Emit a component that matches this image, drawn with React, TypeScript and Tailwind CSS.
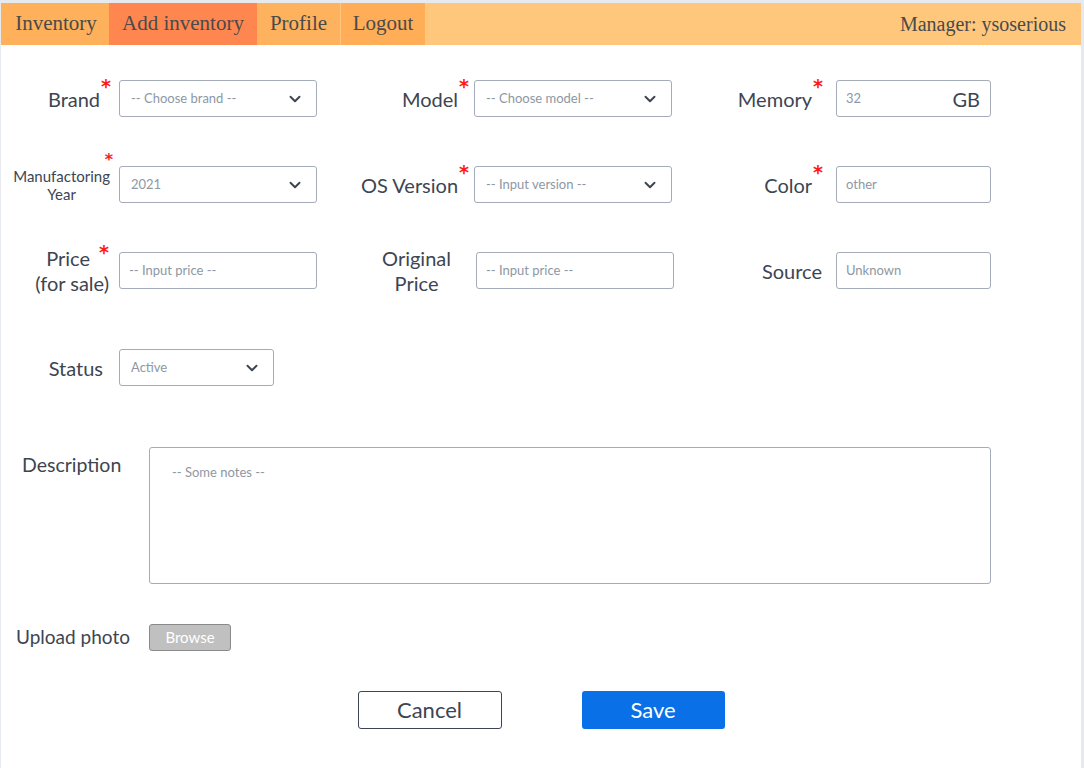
import { ChevronDown } from 'lucide-react'

const labelText = 'text-[20px] text-[#3d4552]'

function Star() {
  return (
    <span className="relative -top-[7px] ml-[1px] text-[19px] leading-none font-bold text-[#ff1a1a] [font-family:'DejaVu_Sans',sans-serif]">
      *
    </span>
  )
}

function Select({ value, width = 'w-[198px]' }: { value: string; width?: string }) {
  return (
    <div
      className={`${width} h-[37px] flex items-center justify-between pl-[11px] pr-[12px] border border-[#a3acb8] rounded-[3px] bg-white`}
    >
      <span className="text-[13px] text-[#8e97a3]">{value}</span>
      <ChevronDown size={18} strokeWidth={2.6} className="text-[#3d4552]" />
    </div>
  )
}

function Input({ value, width = 'w-[198px]' }: { value: string; width?: string }) {
  return (
    <div
      className={`${width} h-[37px] flex items-center pl-[9px] border border-[#a3acb8] rounded-[3px] bg-white`}
    >
      <span className="text-[13px] text-[#8e97a3]">{value}</span>
    </div>
  )
}

export default function App() {
  return (
    <div className="min-h-screen bg-white border-t-[3px] border-l border-r-[3px] border-[#e6e9ee] [font-family:Lato,'Open_Sans',sans-serif]">
      {/* Nav */}
      <nav className="h-[42px] flex items-stretch bg-[#ffc77c] text-[21px] text-[#4a4a4a] [font-family:'Liberation_Serif',serif]">
        <a className="w-[108px] flex items-center justify-center pl-[2px] bg-[#ffb05b]">Inventory</a>
        <a className="w-[148px] flex items-center justify-center bg-[#ff864f]">Add inventory</a>
        <a className="w-[84px] flex items-center justify-center bg-[#ffb25e] border-r border-[#ffc77c]">Profile</a>
        <a className="w-[84px] flex items-center justify-center bg-[#ffae57]">Logout</a>
        <div className="flex-1" />
        <div className="flex items-center pr-[15px] text-[20px]">Manager: ysoserious</div>
      </nav>

      {/* Form grid */}
      <div className="pt-[35px] grid grid-cols-[118px_198px_157px_198px_164px_154px] grid-rows-[37px_37px_37px] gap-y-[49px] items-center">
        <div className={`flex justify-end pr-[8px] ${labelText}`}>
          Brand<Star />
        </div>
        <Select value="-- Choose brand --" />
        <div className={`flex justify-end pr-[5px] ${labelText}`}>
          Model<Star />
        </div>
        <Select value="-- Choose model --" />
        <div className={`flex justify-end pr-[13px] ${labelText}`}>
          Memory<Star />
        </div>
        <div className="w-[155px] h-[37px] flex items-center justify-between pl-[9px] pr-[10px] border border-[#a3acb8] rounded-[3px]">
          <span className="text-[13px] text-[#8e97a3]">32</span>
          <span className={labelText}>GB</span>
        </div>

        <div className="flex flex-col items-end pr-[9px] pb-[12px]">
          <span className="h-[12px] text-[16px] leading-[12px] font-bold text-[#ff1a1a] [font-family:'DejaVu_Sans',sans-serif] -mr-[3px]">*</span>
          <div className="mt-[1px] text-center text-[15px] leading-[18px] text-[#3d4552]">
            Manufactoring
            <br />
            Year
          </div>
        </div>
        <Select value="2021" />
        <div className={`flex justify-end pr-[5px] ${labelText}`}>
          OS Version<Star />
        </div>
        <Select value="-- Input version --" />
        <div className={`flex justify-end pr-[13px] ${labelText}`}>
          Color<Star />
        </div>
        <Input value="other" width="w-[155px]" />

        <div className="flex justify-end pr-[10px]">
          <div className={`text-center leading-[25px] ${labelText}`}>
            <div className="flex justify-end">
              Price<span className="ml-[8px]"><Star /></span>
            </div>
            <div>(for sale)</div>
          </div>
        </div>
        <Input value="-- Input price --" />
        <div className="flex justify-end pr-[23px]">
          <div className={`text-center leading-[25px] ${labelText}`}>
            Original
            <br />
            Price
          </div>
        </div>
        <div className="pl-[2px]">
          <Input value="-- Input price --" />
        </div>
        <div className={`flex justify-end pr-[14px] ${labelText}`}>Source</div>
        <Input value="Unknown" width="w-[155px]" />
      </div>

      {/* Status */}
      <div className="mt-[60px] flex items-center">
        <div className={`w-[118px] flex justify-end pr-[16px] ${labelText}`}>Status</div>
        <Select value="Active" width="w-[155px]" />
      </div>

      {/* Description */}
      <div className="mt-[61px] flex items-start">
        <div className={`w-[148px] pl-[21px] pt-[3px] text-[19.5px] text-[#3d4552]`}>Description</div>
        <div className="w-[842px] h-[137px] border border-[#a3acb8] rounded-[3px] pl-[22px] pt-[11px]">
          <span className="text-[13px] text-[#8e97a3]">-- Some notes --</span>
        </div>
      </div>

      {/* Upload */}
      <div className="mt-[39px] flex items-center">
        <div className={`w-[148px] pl-[15px] text-[19px] text-[#3d4552]`}>Upload photo</div>
        <button className="w-[82px] h-[27px] bg-[#c0c0c0] border border-[#8a8a8a] rounded-[3px] text-[15px] text-white">
          Browse
        </button>
      </div>

      {/* Actions */}
      <div className="mt-[39px] flex justify-center gap-[80px]">
        <button className="w-[144px] h-[38px] border border-[#3d4552] rounded-[3px] bg-white text-[22px] text-[#3d4552]">
          Cancel
        </button>
        <button className="w-[143px] h-[38px] rounded-[3px] bg-[#0a70e8] text-[22px] text-white">
          Save
        </button>
      </div>
    </div>
  )
}
